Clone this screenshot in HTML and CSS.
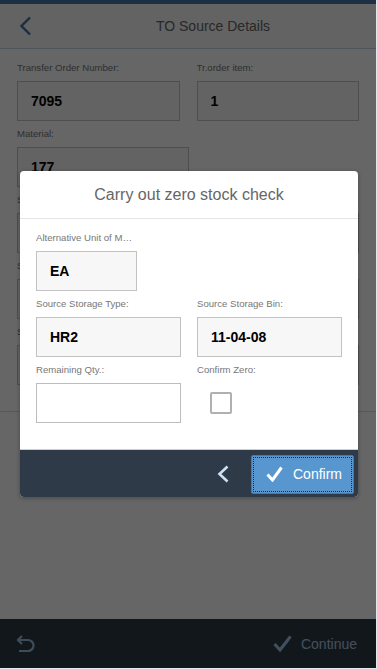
FILE: index.html
```html
<!DOCTYPE html>
<html>
<head>
<meta charset="utf-8">
<link rel="stylesheet" href="styles.css">
</head>
<body>
<div class="app">

<div class="topbar"></div>

<div class="header">
<div class="back">
<svg width="13" height="20" viewBox="0 0 13 20"><polyline points="11,1.5 2.5,10 11,18.5" fill="none" stroke="#4170a3" stroke-width="2.4"/></svg>
</div>
<div class="title">TO Source Details</div>
</div>

<div class="content">
<div class="form">

<div class="row">
<div class="field">
<div class="label">Transfer Order Number:</div>
<div class="input">7095</div>
</div>
<div class="field">
<div class="label">Tr.order item:</div>
<div class="input">1</div>
</div>
</div>

<div class="row">
<div class="field material">
<div class="label">Material:</div>
<div class="input">177</div>
</div>
</div>

<div class="row">
<div class="field wide">
<div class="label">Source Storage Type:</div>
<div class="input">HR2</div>
</div>
</div>

<div class="row">
<div class="field wide">
<div class="label">Source Storage Bin:</div>
<div class="input">11-04-08</div>
</div>
</div>

<div class="row">
<div class="field wide">
<div class="label">Source Quantity:</div>
<div class="input">1</div>
</div>
</div>

</div>
</div>

<div class="footer">
<svg width="21" height="19" viewBox="0 0 21 19"><path d="M7 2 L3 6 L7 10 M3 6 H13 A5.5 5.5 0 0 1 13 17 H4" fill="none" stroke="#9bbfe2" stroke-width="2.2"/></svg>
<div class="continue">
<svg width="19" height="17" viewBox="0 0 19 17"><path d="M1.5 9 L7 15 L17.5 1.5" fill="none" stroke="#a6c6e6" stroke-width="3"/></svg>
<span>Continue</span>
</div>
</div>

<div class="overlay">
<div class="dialog">

<div class="dlg-head">Carry out zero stock check</div>

<div class="dlg-body">

<div class="row">
<div class="field unit">
<div class="label">Alternative Unit of Measure:</div>
<div class="input">EA</div>
</div>
</div>

<div class="row">
<div class="field">
<div class="label">Source Storage Type:</div>
<div class="input">HR2</div>
</div>
<div class="field">
<div class="label">Source Storage Bin:</div>
<div class="input">11-04-08</div>
</div>
</div>

<div class="row">
<div class="field">
<div class="label">Remaining Qty.:</div>
<div class="input edit"></div>
</div>
<div class="field">
<div class="label">Confirm Zero:</div>
<div class="check-holder"><div class="checkbox"></div></div>
</div>
</div>

</div>

<div class="dlg-foot">
<svg class="dlg-back" width="12" height="18" viewBox="0 0 12 18"><polyline points="10.5,1.5 2.5,9 10.5,16.5" fill="none" stroke="#cde1f4" stroke-width="2.6"/></svg>
<button class="confirm">
<svg width="17" height="16" viewBox="0 0 17 16"><path d="M1.5 8.5 L6.5 14 L15.5 1.5" fill="none" stroke="#fff" stroke-width="3"/></svg>
<span>Confirm</span>
</button>
</div>

</div>
</div>

</div>
</body>
</html>
```

FILE: styles.css
```css
* {
    box-sizing: border-box;
}

body {
    margin: 0;
    background: #e6e6ee;
    font-family: "Liberation Sans", Arial, sans-serif;
}

.app {
    position: relative;
    width: 376px;
    height: 668px;
    display: flex;
    flex-direction: column;
    background: #fff;
    overflow: hidden;
}

.topbar {
    height: 4px;
    background: #4a76a8;
}

.header {
    height: 45px;
    display: flex;
    align-items: center;
    background: #f7f7f7;
    border-bottom: 1px solid #c3d3e3;
}

.back {
    width: 50px;
    display: flex;
    justify-content: center;
}

.title {
    flex: 1;
    text-align: center;
    font-size: 14px;
    color: #666;
}

.content {
    flex: 1;
}

.form {
    padding: 6px 17px 26px;
    border-bottom: 1px solid #dcdcdc;
}

.row {
    display: flex;
    gap: 17px;
}

.field {
    display: flex;
    flex-direction: column;
    width: 163px;
}

.field.material {
    width: 172px;
}

.field.wide {
    flex: 1;
}

.label {
    height: 26px;
    padding-top: 6px;
    font-size: 9.6px;
    line-height: 14px;
    color: #777;
    white-space: nowrap;
    overflow: hidden;
    text-overflow: ellipsis;
}

.input {
    height: 40px;
    display: flex;
    align-items: center;
    padding: 0 13px;
    border: 1px solid #c2c2c2;
    background: #f7f7f7;
    font-size: 14px;
    font-weight: bold;
    color: #000;
}

.input.edit {
    background: #fff;
    border-color: #bdbdbd;
}

.footer {
    height: 49px;
    display: flex;
    align-items: center;
    justify-content: space-between;
    padding: 0 19px 0 15px;
    background: #2f3b48;
}

.continue {
    display: flex;
    align-items: center;
    gap: 9px;
    font-size: 14px;
    color: #a9c6e3;
}

/* dialog */

.overlay {
    position: absolute;
    top: 0;
    left: 0;
    right: 0;
    bottom: 0;
    display: flex;
    align-items: center;
    justify-content: center;
    background: rgba(0, 0, 0, 0.6);
}

.dialog {
    width: 338px;
    margin-left: 2px;
    background: #fff;
    border-radius: 4px;
    overflow: hidden;
    box-shadow: 0 1px 4px rgba(0, 0, 0, 0.3);
}

.dlg-head {
    height: 48px;
    display: flex;
    align-items: center;
    justify-content: center;
    border-bottom: 1px solid #e5e5e5;
    font-size: 16px;
    color: #666;
}

.dlg-body {
    padding: 6px 16px 26px;
    border-bottom: 1px solid #cfcfcf;
}

.dlg-body .row {
    gap: 16px;
}

.dlg-body .field {
    width: 145px;
}

.dlg-body .field.unit {
    width: 101px;
}

.check-holder {
    height: 40px;
    display: flex;
    align-items: center;
    padding-left: 13px;
}

.checkbox {
    width: 22px;
    height: 22px;
    border: 2px solid #b0b0b0;
    border-radius: 2px;
    background: #fff;
}

.dlg-foot {
    height: 47px;
    display: flex;
    align-items: center;
    justify-content: flex-end;
    padding: 1px 4px 0;
    background: #2e3a47;
}

.dlg-back {
    margin-right: 22px;
}

.confirm {
    width: 103px;
    height: 39px;
    display: flex;
    align-items: center;
    gap: 10px;
    padding: 0 0 0 14px;
    border: 1px solid #3a7bbf;
    border-radius: 2px;
    background: #5896cf;
    outline: 1px dotted #1b2a3a;
    outline-offset: -3px;
    font-family: "Liberation Sans", Arial, sans-serif;
    font-size: 14px;
    color: #fff;
}
```
